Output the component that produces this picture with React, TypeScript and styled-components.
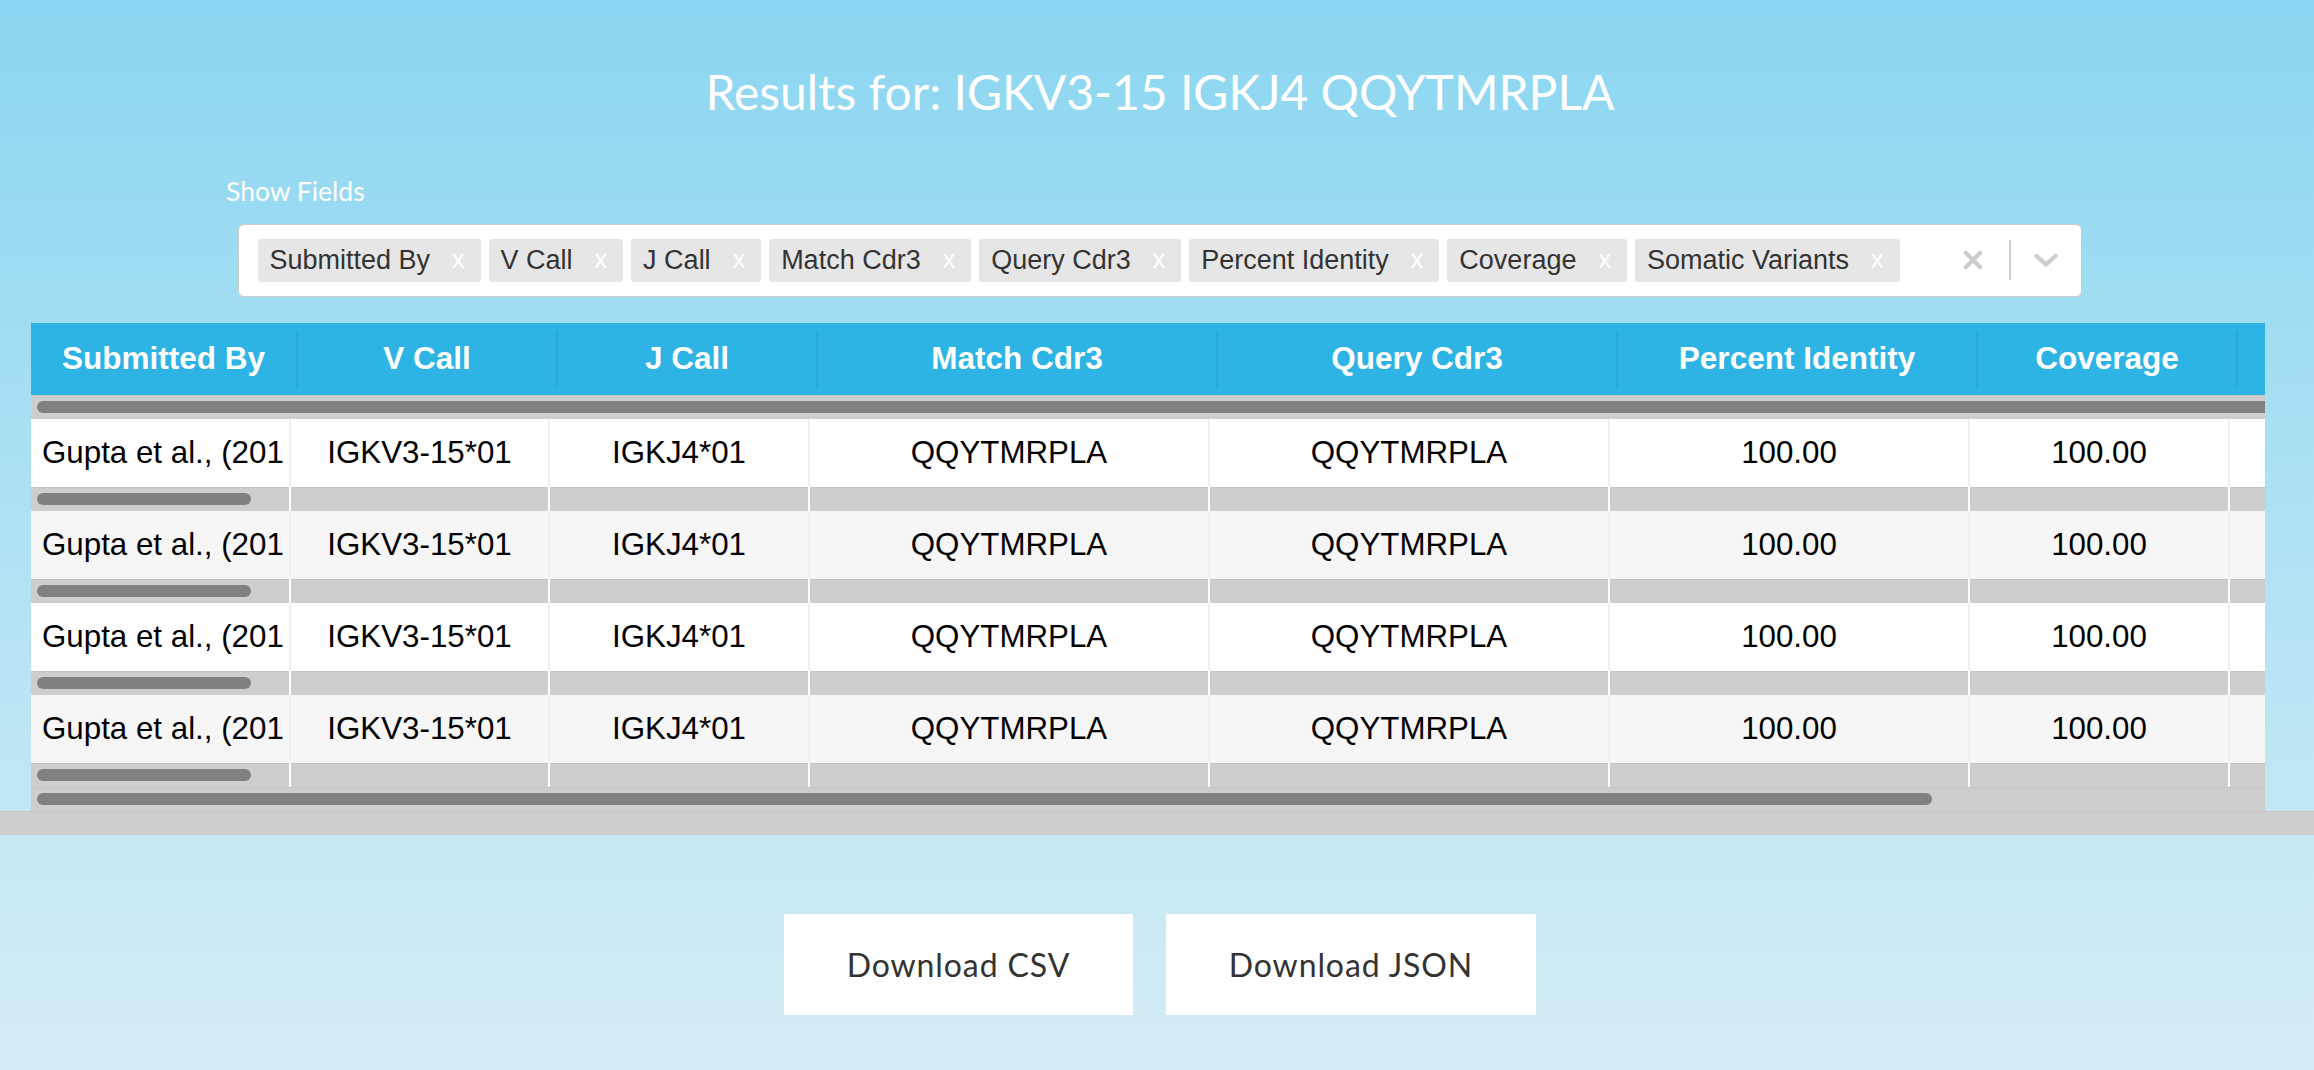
import React from "react";
import styled, { createGlobalStyle } from "styled-components";

const GlobalStyle = createGlobalStyle`
  html, body {
    margin: 0;
    padding: 0;
  }
  body {
    font-family: "Liberation Sans", Arial, sans-serif;
    overflow: hidden;
  }
  * { box-sizing: border-box; }
`;

const Page = styled.div`
  width: 100%;
  min-height: 1070px;
  background: linear-gradient(180deg, #8bd6f1 0%, #d5edf6 100%);
  display: flex;
  flex-direction: column;
  overflow: hidden;
`;

const Title = styled.h1`
  margin: 63px 0 0;
  padding-left: 6px;
  text-align: center;
  font-family: Lato, "Open Sans", sans-serif;
  font-weight: 400;
  font-size: 48px;
  line-height: 57.6px;
  color: #ffffff;
`;

const FieldsBlock = styled.div`
  margin: 55px 0 0 226px;
  display: flex;
  flex-direction: column;
`;

const FieldsLabel = styled.label`
  font-family: Lato, "Open Sans", sans-serif;
  font-size: 26.5px;
  line-height: 30px;
  color: #ffffff;
`;

const SelectBox = styled.div`
  margin: 18px 0 0 12px;
  width: 1844px;
  height: 73px;
  background: #ffffff;
  border: 1.5px solid #cccccc;
  border-radius: 6px;
  display: flex;
  align-items: center;
  padding-left: 18.5px;
`;

const ValueList = styled.div`
  display: flex;
  align-items: center;
  gap: 8px;
`;

const Tag = styled.div`
  display: flex;
  align-items: center;
  height: 43px;
  background: #e6e6e6;
  border-radius: 3px;
  font-family: "Liberation Sans", Arial, sans-serif;
  font-size: 27px;
  color: #333333;
  white-space: nowrap;
`;

const TagLabel = styled.span`
  padding-left: 12px;
`;

const TagRemove = styled.span`
  padding: 0 16px 2px 22px;
  color: #ffffff;
  font-size: 25px;
`;

const Indicators = styled.div`
  margin-left: auto;
  display: flex;
  align-items: center;
  height: 100%;
`;

const IndicatorButton = styled.div<{ $w: number }>`
  width: ${(p) => p.$w}px;
  height: 100%;
  display: flex;
  align-items: center;
  justify-content: center;
  color: #cccccc;
`;

const IndicatorSeparator = styled.span`
  width: 2px;
  height: 40px;
  background: #cccccc;
`;

const TableFrame = styled.div`
  margin: 26px 0 0 31px;
  width: 2234px;
  overflow: hidden;
  display: flex;
  flex-direction: column;
`;

const HeaderRow = styled.div`
  display: flex;
  width: max-content;
  height: 72px;
  padding: 8px 0;
  background: #2eb4e4;
`;

const HeaderCell = styled.div<{ $w: number }>`
  flex: 0 0 ${(p) => p.$w}px;
  min-width: 0;
  display: flex;
  align-items: center;
  justify-content: center;
  border-right: 2px solid #29a9d9;
  font-family: "Liberation Sans", Arial, sans-serif;
  font-weight: 700;
  font-size: 31.5px;
  color: #ffffff;
  white-space: nowrap;
  overflow: hidden;
`;

const Track = styled.div<{ $sep?: boolean }>`
  height: 24px;
  background: #cecece;
  box-shadow: inset 0 1px 0 #c9c4c0;
  padding: 6px 0 6px 6px;
  display: flex;
  border-right: ${(p) => (p.$sep ? "2px solid #ffffff" : "none")};
`;

const Thumb = styled.div<{ $w?: number; $open?: boolean }>`
  height: 12px;
  background: #7f8181;
  border-radius: ${(p) => (p.$open ? "6px 0 0 6px" : "6px")};
  flex: ${(p) => (p.$w ? `0 0 ${p.$w}px` : "1 1 auto")};
`;

const BodyRow = styled.div`
  display: flex;
  width: max-content;
`;

const Cell = styled.div<{ $w: number }>`
  flex: 0 0 ${(p) => p.$w}px;
  width: ${(p) => p.$w}px;
  min-width: 0;
  display: flex;
  flex-direction: column;
`;

const CellContent = styled.div<{ $alt: boolean; $left?: boolean }>`
  height: 68px;
  min-width: 0;
  display: flex;
  align-items: center;
  justify-content: ${(p) => (p.$left ? "flex-start" : "center")};
  padding: ${(p) => (p.$left ? "0 6px 0 11px" : "0")};
  background: ${(p) => (p.$alt ? "#f6f6f6" : "#ffffff")};
  border-right: 2px solid #efefef;
  font-family: "Liberation Sans", Arial, sans-serif;
  font-size: 31.3px;
  color: #000000;
  white-space: nowrap;
  overflow: hidden;
`;

const Clip = styled.span`
  display: block;
  min-width: 0;
  flex: 1 1 auto;
  overflow: hidden;
  white-space: nowrap;
`;

const PageTrack = styled.div`
  height: 24px;
  width: 100%;
  background: #cecece;
  box-shadow: inset 0 1px 0 #c9c4c0;
`;

const ButtonRow = styled.div`
  margin-top: 79px;
  display: flex;
  justify-content: center;
  gap: 33px;
  padding-left: 6px;
`;

const DownloadButton = styled.button<{ $w: number }>`
  width: ${(p) => p.$w}px;
  height: 101px;
  background: #ffffff;
  border: none;
  border-radius: 0;
  font-family: Lato, "Open Sans", sans-serif;
  font-size: 32px;
  letter-spacing: 0.9px;
  color: #333333;
  display: flex;
  align-items: center;
  justify-content: center;
  cursor: pointer;
`;

const fields = [
  "Submitted By",
  "V Call",
  "J Call",
  "Match Cdr3",
  "Query Cdr3",
  "Percent Identity",
  "Coverage",
  "Somatic Variants",
];

const headerWidths = [267, 260, 260, 400, 400, 360, 260, 400];
const bodyWidths = [260, 259, 260, 400, 400, 360, 260, 400];

const rowData = [
  "Gupta et al., (2016)",
  "IGKV3-15*01",
  "IGKJ4*01",
  "QQYTMRPLA",
  "QQYTMRPLA",
  "100.00",
  "100.00",
  "",
];

const ClearIcon = () => (
  <svg width="20" height="20" viewBox="0 0 20 20" aria-hidden="true">
    <path
      d="M3 3 L17 17 M17 3 L3 17"
      stroke="#cccccc"
      strokeWidth="4.2"
      strokeLinecap="round"
      fill="none"
    />
  </svg>
);

const ChevronIcon = () => (
  <svg width="26" height="16" viewBox="0 0 26 16" aria-hidden="true">
    <path
      d="M3.5 4 L13 12.5 L22.5 4"
      stroke="#cccccc"
      strokeWidth="4.2"
      strokeLinecap="round"
      strokeLinejoin="round"
      fill="none"
    />
  </svg>
);

export default function App() {
  return (
    <>
      <GlobalStyle />
      <Page>
        <Title>Results for: IGKV3-15 IGKJ4 QQYTMRPLA</Title>

        <FieldsBlock>
          <FieldsLabel>Show Fields</FieldsLabel>
          <SelectBox>
            <ValueList>
              {fields.map((f) => (
                <Tag key={f}>
                  <TagLabel>{f}</TagLabel>
                  <TagRemove>x</TagRemove>
                </Tag>
              ))}
            </ValueList>
            <Indicators>
              <IndicatorButton $w={72}>
                <ClearIcon />
              </IndicatorButton>
              <IndicatorSeparator />
              <IndicatorButton $w={70}>
                <ChevronIcon />
              </IndicatorButton>
            </Indicators>
          </SelectBox>
        </FieldsBlock>

        <TableFrame>
          <HeaderRow>
            {fields.map((f, i) => (
              <HeaderCell key={f} $w={headerWidths[i]}>
                {i < 7 ? f : ""}
              </HeaderCell>
            ))}
          </HeaderRow>
          <Track>
            <Thumb $open />
          </Track>
          {[0, 1, 2, 3].map((r) => (
            <BodyRow key={r}>
              {rowData.map((v, i) => (
                <Cell key={i} $w={bodyWidths[i]}>
                  <CellContent $alt={r % 2 === 1} $left={i === 0}>
                    {i === 0 ? <Clip>{v}</Clip> : v}
                  </CellContent>
                  <Track $sep>{i === 0 && <Thumb $w={214} />}</Track>
                </Cell>
              ))}
            </BodyRow>
          ))}
          <Track>
            <Thumb $w={1895} />
          </Track>
        </TableFrame>
        <PageTrack />

        <ButtonRow>
          <DownloadButton $w={349}>Download CSV</DownloadButton>
          <DownloadButton $w={370}>Download JSON</DownloadButton>
        </ButtonRow>
      </Page>
    </>
  );
}
